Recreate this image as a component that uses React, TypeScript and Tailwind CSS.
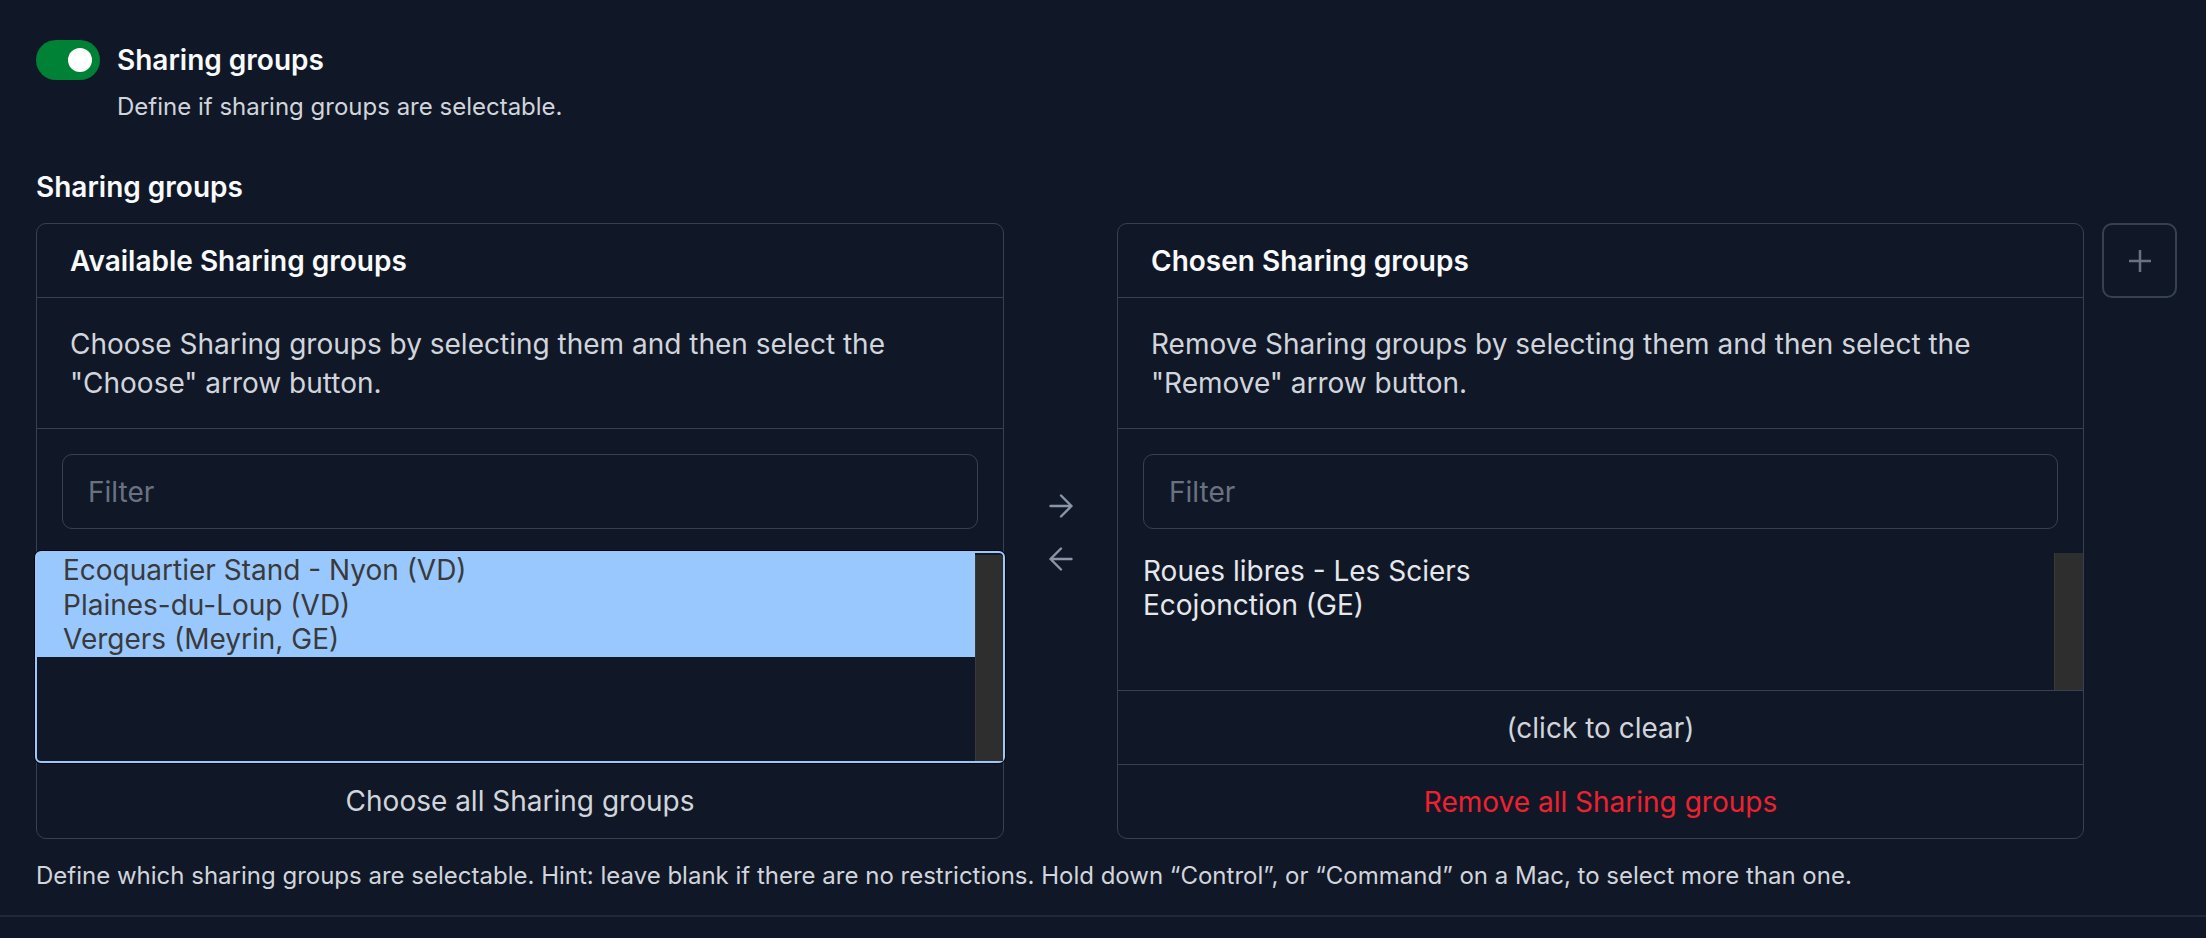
const available = ["Ecoquartier Stand - Nyon (VD)", "Plaines-du-Loup (VD)", "Vergers (Meyrin, GE)"];
const chosen = ["Roues libres - Les Sciers", "Ecojonction (GE)"];

function Arrow({ left }: { left?: boolean }) {
  return (
    <svg
      width="24"
      height="24"
      viewBox="0 0 24 24"
      fill="none"
      stroke="currentColor"
      strokeWidth={2.4}
      strokeLinecap="round"
      strokeLinejoin="round"
      className={left ? "rotate-180" : ""}
    >
      <path d="M1.5 12h21M12 1.5 22.5 12 12 22.5" />
    </svg>
  );
}

function PanelHead({ title, text }: { title: string; text: React.ReactNode }) {
  return (
    <>
      <div className="flex h-[74px] items-center border-b border-[#364153] px-[33px] text-[28px] font-semibold text-[#f9fafb]">
        {title}
      </div>
      <div className="border-b border-[#364153] px-[33px] pt-[27px] pb-[25px] text-[28px] leading-[39px] text-[#d1d5db]">
        {text}
      </div>
    </>
  );
}

function FilterBox() {
  return (
    <div className="px-[25px] pt-[25px] pb-[22px]">
      <div className="flex h-[75px] items-center rounded-[10px] border border-[#364153] pl-[25px] text-[28px] text-[#6a7282]">
        Filter
      </div>
    </div>
  );
}

export default function App() {
  return (
    <div className="min-h-screen bg-[#101828] font-['Inter',sans-serif]">
      <div className="border-b-2 border-[#1e2939] px-[36px] pt-[40px] pb-[22px]">
        {/* toggle row */}
        <div className="flex">
          <div className="flex h-[40px] w-[64px] shrink-0 items-center justify-end rounded-full bg-[#008236] pr-[8px]">
            <div className="h-[24px] w-[24px] rounded-full bg-white" />
          </div>
          <div className="ml-[17px]">
            <div className="text-[28px] leading-[40px] font-semibold text-[#f9fafb]">Sharing groups</div>
            <div className="mt-[10px] text-[24px] leading-[34px] text-[#d1d5db]">
              Define if sharing groups are selectable.
            </div>
          </div>
        </div>

        <div className="mt-[43px] text-[28px] leading-[40px] font-semibold text-[#f9fafb]">Sharing groups</div>

        <div className="mt-[16px] flex">
          {/* available */}
          <div className="w-[968px] shrink-0 rounded-[10px] border border-[#364153]">
            <PanelHead
              title="Available Sharing groups"
              text={
                <>
                  Choose Sharing groups by selecting them and then select the
                  <br />
                  "Choose" arrow button.
                </>
              }
            />
            <FilterBox />
            <div className="relative z-10 -mx-[2px] flex h-[212px] rounded-[6px] border-2 border-[#99c8ff] shadow-[0_0_0_1px_#050505]">
              <div className="flex-1 text-[28px] leading-[34.5px] text-[#3a3a3a]">
                {available.map((name) => (
                  <div key={name} className="bg-[#99c8ff] pl-[26px]">
                    {name}
                  </div>
                ))}
              </div>
              <div className="mt-[2px] w-[28px] border-l border-[#3a3a3a] bg-[#2e2e2e]" />
            </div>
            <div className="flex h-[75px] items-center justify-center text-[28px] text-[#d1d5db]">
              Choose all Sharing groups
            </div>
          </div>

          {/* move buttons */}
          <div className="flex w-[113px] shrink-0 flex-col items-center gap-[29px] pt-[271px] text-[#8b95a7]">
            <Arrow />
            <Arrow left />
          </div>

          {/* chosen */}
          <div className="w-[967px] shrink-0 rounded-[10px] border border-[#364153]">
            <PanelHead
              title="Chosen Sharing groups"
              text={
                <>
                  Remove Sharing groups by selecting them and then select the
                  <br />
                  "Remove" arrow button.
                </>
              }
            />
            <FilterBox />
            <div className="flex h-[139px]">
              <div className="flex-1 pt-[3px] text-[28px] leading-[34px] text-[#e5e7eb]">
                {chosen.map((name) => (
                  <div key={name} className="pl-[25px]">
                    {name}
                  </div>
                ))}
              </div>
              <div className="mt-[2px] w-[29px] border-l border-[#3a3a3a] bg-[#2e2e2e]" />
            </div>
            <div className="flex h-[74px] items-center justify-center border-t border-[#364153] text-[28px] text-[#d1d5db]">
              (click to clear)
            </div>
            <div className="flex h-[74px] items-center justify-center border-t border-[#364153] text-[28px] text-[#f0212f]">
              Remove all Sharing groups
            </div>
          </div>

          <button className="ml-[18px] flex h-[75px] w-[75px] shrink-0 items-center justify-center rounded-[10px] border-2 border-[#364153] text-[#6a7282]">
            <svg width="22" height="22" viewBox="0 0 22 22" fill="none" stroke="currentColor" strokeWidth={2.5}>
              <path d="M11 0v22M0 11h22" />
            </svg>
          </button>
        </div>

        <p className="mt-[20px] text-[24px] leading-[34px] text-[#d1d5db]">
          Define which sharing groups are selectable. Hint: leave blank if there are no restrictions. Hold down “Control”, or “Command” on a Mac, to select more than one.
        </p>
      </div>
    </div>
  );
}
